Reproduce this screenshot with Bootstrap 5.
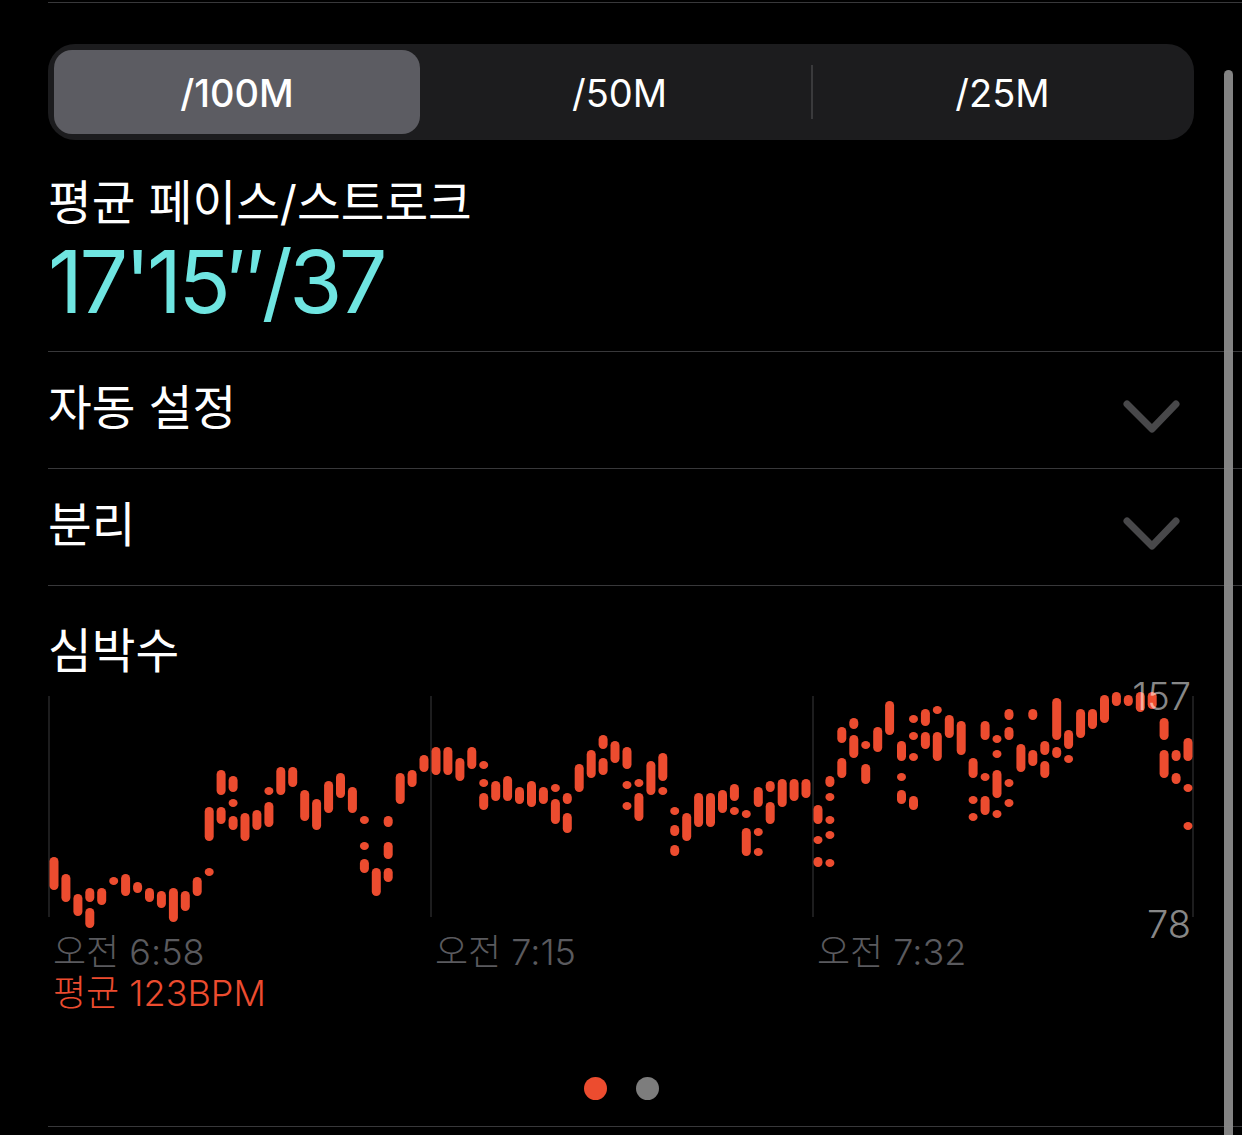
<!DOCTYPE html>
<html lang="ko">
<head>
    <meta charset="UTF-8">
    <meta name="viewport" content="width=device-width, initial-scale=1.0">
    <title>수영 기록</title>
    <link href="https://cdn.jsdelivr.net/npm/bootstrap@5.3.2/dist/css/bootstrap.min.css" rel="stylesheet">
    <script src="https://cdn.jsdelivr.net/npm/bootstrap@5.3.2/dist/js/bootstrap.bundle.min.js"></script>
    <style>
        html, body {
            height: 1135px;
            overflow: hidden;
            background: #000;
        }
        body {
            position: relative;
            color: #fff;
            font-family: Inter, "Noto Sans CJK KR", sans-serif;
        }
        .page {
            padding: 2px 0 0 48px;
        }
        .line-top, .sect {
            border-bottom: 1px solid #38383a;
        }
        .line-top {
            height: 1px;
        }
        .seg {
            width: 1146px;
            height: 96px;
            margin-top: 41px;
            padding: 6px;
            background: #1c1c1e;
            border-radius: 27px;
        }
        .seg-item {
            position: relative;
            flex: none;
            width: 383px;
            height: 84px;
            font-size: 38px;
            line-height: 86px;
            text-align: center;
        }
        .seg-item.active-seg {
            width: 366px;
            margin-right: 8px;
            background: #5c5c62;
            border-radius: 18px;
            font-weight: 500;
        }
        .seg-item.with-div::before {
            content: "";
            position: absolute;
            left: 0;
            top: 15px;
            height: 54px;
            width: 2px;
            background: #3a3a3c;
        }
        .metric {
            height: 212px;
            padding-top: 35px;
        }
        .title-ko {
            font-size: 47.5px;
            line-height: 56px;
            margin: 0;
            font-weight: 400;
        }
        .metric-value {
            margin-top: 4px;
            font-size: 86px;
            line-height: 94px;
            color: #6fe5e1;
            letter-spacing: -3.5px;
            font-weight: 400;
        }
        .row-sect {
            height: 117px;
            padding-top: 4px;
            padding-right: 59px;
            padding-bottom: 8px;
        }
        .chev {
            width: 60px;
            height: 36px;
            margin-top: 20px;
        }
        .hr-sect {
            height: 541px;
            padding-top: 37px;
        }
        .hr-chart {
            display: block;
            width: 1146px;
            height: 240px;
            margin-top: 11px;
        }
        .chart-wrap {
            position: relative;
            width: 1146px;
        }
        .scale-label {
            position: absolute;
            right: 3px;
            font-size: 38px;
            line-height: 40px;
            color: rgba(255, 255, 255, .55);
            font-weight: 300;
        }
        .scale-max { top: -14px; }
        .scale-min { top: 214px; }
        .time-row {
            margin-top: 2px;
        }
        .time-col {
            width: 382px;
            padding-left: 5px;
            font-size: 36px;
            line-height: 40px;
            color: #5a5a5e;
            font-weight: 300;
        }
        .avg-bpm {
            padding-left: 5px;
            font-size: 36px;
            line-height: 42px;
            color: #ec4c2f;
            font-weight: 300;
        }
        .dots {
            margin-top: 63px;
            gap: 29px;
        }
        .dot-item {
            width: 23px;
            height: 23px;
            border-radius: 50%;
            background: #7d7d7d;
        }
        .dot-item.on {
            background: #ec4c2f;
        }
        .scroll-thumb {
            position: absolute;
            left: 1224px;
            top: 70px;
            bottom: -10px;
            width: 9px;
            border-radius: 5px;
            background: rgba(136, 136, 136, .96);
        }
    </style>
</head>
<body>

<div class="page">
    <div class="line-top"></div>

    <div class="seg d-flex" style="margin-right: 48px">
        <div class="seg-item active-seg">/100M</div>
        <div class="seg-item">/50M</div>
        <div class="seg-item with-div">/25M</div>
    </div>

    <div class="sect metric">
        <h2 class="title-ko">평균 페이스/스트로크</h2>
        <div class="metric-value">17'15″/37</div>
    </div>

    <div class="sect row-sect d-flex justify-content-between align-items-center">
        <h2 class="title-ko">자동 설정</h2>
        <svg class="chev" viewBox="0 0 60 36"><path d="M4 4 L29 29 L53 4" fill="none" stroke="#48484a" stroke-width="7" stroke-linecap="round" stroke-linejoin="round"/></svg>
    </div>

    <div class="sect row-sect d-flex justify-content-between align-items-center">
        <h2 class="title-ko">분리</h2>
        <svg class="chev" viewBox="0 0 60 36"><path d="M4 4 L29 29 L53 4" fill="none" stroke="#48484a" stroke-width="7" stroke-linecap="round" stroke-linejoin="round"/></svg>
    </div>

    <div class="sect hr-sect">
        <h2 class="title-ko">심박수</h2>
        <div class="chart-wrap">
            <svg id="hrChart" class="hr-chart" viewBox="48 690 1146 240"></svg>
            <span class="scale-label scale-max">157</span>
            <span class="scale-label scale-min">78</span>
        </div>
        <div class="time-row d-flex">
            <div class="time-col">오전 6:58</div>
            <div class="time-col">오전 7:15</div>
            <div class="time-col">오전 7:32</div>
        </div>
        <div class="avg-bpm">평균 123BPM</div>
        <div class="dots d-flex justify-content-center" style="margin-right: 48px">
            <div class="dot-item on"></div>
            <div class="dot-item"></div>
        </div>
    </div>
</div>

<div class="scroll-thumb"></div>

<script>
    // 각 열의 세그먼트 [y시작, y끝]
    const columns = [
        [[857,890]], [[874,902]], [[894,916]], [[888,902],[908,928]], [[888,905]], [[877,885]],
        [[874,896]], [[882,893]], [[888,902]], [[891,908]], [[888,922]], [[891,911]],
        [[877,896]], [[807,841],[868,876]], [[770,795],[807,824]], [[776,792],[799,807],[816,830]],
        [[813,841]], [[810,830]], [[787,795],[802,827]], [[767,795]], [[767,787]], [[790,821]],
        [[799,830]], [[781,813]], [[773,798]], [[787,813]], [[816,824],[842,850],[859,873]],
        [[868,896]], [[816,827],[842,859],[868,882]], [[773,804]], [[770,787]], [[755,772]],
        [[747,775]], [[747,775]], [[758,781]], [[747,769]], [[761,769],[779,787],[793,810]],
        [[781,801]], [[776,801]], [[787,804]], [[781,807]], [[787,804]], [[784,792],[799,824]],
        [[793,804],[813,833]], [[764,792]], [[750,778]], [[735,749],[758,775]], [[741,763]],
        [[747,769],[781,789],[802,810]], [[779,787],[793,821]], [[761,795]], [[753,781],[787,795]],
        [[807,815],[825,836],[845,856]], [[813,841]], [[793,827]], [[793,827]], [[790,813]],
        [[784,801],[807,815]], [[810,818],[828,856]], [[787,807],[828,836],[848,856]],
        [[781,792],[802,824]], [[779,807]], [[779,801]], [[779,798]],
        [[805,824],[836,844],[857,867]], [[776,787],[793,801],[816,824],[831,839],[859,867]],
        [[727,743],[758,778]], [[718,729],[735,758]], [[741,749],[764,784]], [[727,752]], [[701,735]],
        [[741,761],[773,781],[790,804]], [[715,723],[732,740],[753,761],[796,810]],
        [[709,726],[732,749]], [[706,714],[732,761]], [[715,738]], [[721,755]],
        [[758,778],[796,804],[813,821]], [[721,740],[773,781],[796,815]],
        [[735,743],[750,758],[770,798],[810,818]], [[709,720],[727,740],[779,787],[799,807]],
        [[744,772]], [[709,720],[750,766]], [[741,755],[761,778]], [[698,740],[747,758]],
        [[730,749],[755,763]], [[709,738]], [[709,729]], [[695,723]], [[692,706]], [[695,706]],
        [[692,712]], [[692,709]], [[718,740],[750,778]], [[750,761],[773,784]],
        [[738,761],[784,792],[822,830]]
    ];

    const chart = document.getElementById("hrChart");
    let markup = "";

    [49, 431, 813, 1193].forEach(x => {
        markup += `<rect x="${x - 0.5}" y="696" width="1" height="221" fill="#3a3a3c"/>`;
    });

    columns.forEach((segs, i) => {
        const cx = 54 + i * 11.937;
        segs.forEach(([top, bottom]) => {
            markup += `<rect x="${(cx - 4.5).toFixed(1)}" y="${top}" width="9" height="${bottom - top}" rx="4.5" fill="#ec4c2f"/>`;
        });
    });

    chart.innerHTML = markup;
</script>

</body>
</html>
